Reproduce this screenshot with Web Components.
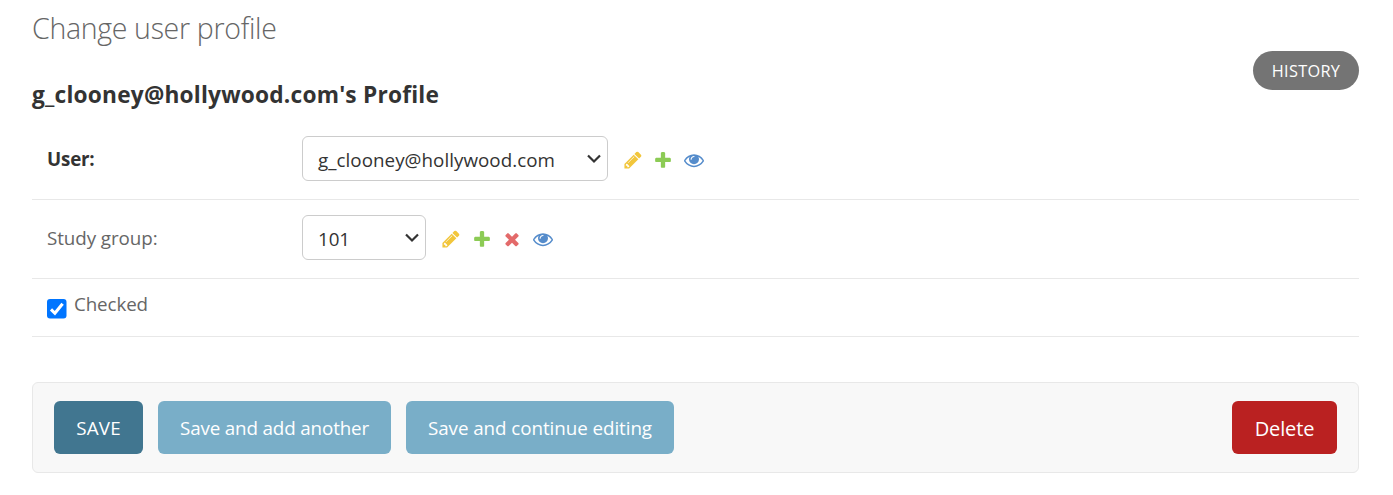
<!DOCTYPE html>
<html lang="en">
<head>
<meta charset="utf-8">
<title>Change user profile</title>
<style>
body { margin: 0; background: #fff; font-family: "Open Sans", "Noto Sans", sans-serif; color: #333; }
</style>
</head>
<body>
<admin-page></admin-page>
<script>
const define = (name, html, setup) => {
  customElements.define(name, class extends HTMLElement {
    connectedCallback() {
      if (this.shadowRoot) return;
      this.attachShadow({ mode: 'open' }).innerHTML = html;
      if (setup) setup(this, this.shadowRoot);
    }
  });
};

// Single-line text tracked so that it takes the given advance width.
define('tracked-text', `<style>
:host { display: inline-block; white-space: nowrap; }
span { display: inline-block; font-variant-ligatures: none; }
</style><span></span>`, (host, root) => {
  const span = root.querySelector('span');
  const text = host.getAttribute('text');
  const width = Number(host.getAttribute('width'));
  span.textContent = text;
  const gap = (width - span.getBoundingClientRect().width) / text.length;
  span.style.letterSpacing = gap.toFixed(3) + 'px';
  host.style.width = width + 'px';
});

const icons = {
  edit: ['#efb80b', 'M491 1536l91-91-235-235-91 91v107h128v128h107zm523-928q0-22-22-22-10 0-17 7l-542 542q-7 7-7 17 0 22 22 22 10 0 17-7l542-542q7-7 7-17zm-54-192l416 416-832 832h-416v-416zm683 96q0 53-37 90l-166 166-416-416 166-165q36-38 90-38 53 0 91 38l235 234q37 39 37 91z'],
  add: ['#70bf2b', 'M1600 796v192q0 40-28 68t-68 28h-416v416q0 40-28 68t-68 28h-192q-40 0-68-28t-28-68v-416h-416q-40 0-68-28t-28-68v-192q0-40 28-68t68-28h416v-416q0-40 28-68t68-28h192q40 0 68 28t28 68v416h416q40 0 68 28t28 68z'],
  remove: ['#dd4646', 'M1490 1322q0 40-28 68l-136 136q-28 28-68 28t-68-28l-294-294-294 294q-28 28-68 28t-68-28l-136-136q-28-28-28-68t28-68l294-294-294-294q-28-28-28-68t28-68l136-136q28-28 68-28t68 28l294 294 294-294q28-28 68-28t68 28l136 136q28 28 28 68t-28 68l-294 294 294 294q28 28 28 68z'],
  view: ['#2b70bf', 'M1664 960q-152-236-381-353 61 104 61 225 0 185-131.5 316.5t-316.5 131.5-316.5-131.5-131.5-316.5q0-121 61-225-229 117-381 353 133 205 333.5 326.5t434.5 121.5 434.5-121.5 333.5-326.5zm-720-384q0-20-14-34t-34-14q-125 0-214.5 89.5t-89.5 214.5q0 20 14 34t34 14 34-14 14-34q0-86 61-147t147-61q20 0 34-14t14-34zm848 384q0 34-20 69-140 230-376.5 368.5t-499.5 138.5-499.5-139-376.5-368q-20-35-20-69t20-69q140-229 376.5-368t499.5-139 499.5 139 376.5 368q20 35 20 69z']
};
define('action-icon', `<style>
:host { display: block; width: 20px; height: 20px; opacity: .8; }
svg { display: block; width: 100%; height: 100%; }
</style><svg viewBox="0 0 1792 1792"><path/></svg>`, (host, root) => {
  const [fill, d] = icons[host.getAttribute('name')];
  const path = root.querySelector('path');
  path.setAttribute('fill', fill);
  path.setAttribute('d', d);
});

define('select-box', `<style>
:host { display: flex; align-items: center; justify-content: space-between; box-sizing: border-box; height: 45px; padding: 0 5px 0 15px; border: 1px solid #ccc; border-radius: 6px; font-size: 18.8px; line-height: 28px; color: #333; }
svg { display: block; }
.text { padding-top: 3px; }
</style><div class="text"><slot></slot></div>
<svg width="16" height="12" viewBox="0 0 16 12"><path d="M2 2.5L8 8.5L14 2.5" fill="none" stroke="#333" stroke-width="2.2"/></svg>`);

define('form-row', `<style>
:host { display: flex; align-items: flex-start; box-sizing: border-box; height: 79px; padding: 15px; border-bottom: 1px solid #e8e8e8; }
.label { width: 255px; font-size: 18.8px; line-height: 28px; padding-top: 9px; color: #666; }
:host([required]) .label { font-weight: 700; color: #333; }
.icons { display: flex; gap: 10.7px; padding: 14px 0 0 15px; }
:host([required]) .icons { gap: 10.3px; }
</style><div class="label"><slot name="label"></slot></div><slot></slot><div class="icons"><slot name="icon"></slot></div>`);

define('check-row', `<style>
:host { display: flex; align-items: flex-start; box-sizing: border-box; height: 58px; padding: 11px 15px 0; border-bottom: 1px solid #e8e8e8; font-size: 18.8px; line-height: 28px; color: #666; gap: 7px; }
svg { display: block; margin-top: 9px; }
</style><svg width="20" height="20" viewBox="0 0 20 20"><rect width="19.5" height="19.5" rx="3" fill="#0075ff"/><path d="M4 10.4L7.9 14.3L15.6 4.8" fill="none" stroke="#fff" stroke-width="3.1"/></svg><slot></slot>`);

define('submit-button', `<style>
:host { display: flex; align-items: center; justify-content: center; height: 53px; border-radius: 6px; background: #79aec8; color: #fff; font-size: 18.8px; line-height: 28px; }
:host([kind=default]) { background: #417690; }
:host([kind=delete]) { background: #ba2121; margin-left: auto; font-size: 20px; }
:host([kind=delete]) slot { display: block; padding-top: 2px; }
</style><slot></slot>`);

define('submit-row', `<style>
:host { display: flex; box-sizing: border-box; height: 91px; margin-top: 45px; padding: 18px 21px; gap: 15px; border: 1px solid #e8e8e8; border-radius: 6px; background: #f8f8f8; }
</style><slot></slot>`);

define('history-link', `<style>
:host { display: flex; align-items: center; justify-content: center; width: 106px; height: 39px; border-radius: 20px; background: #747474; color: #fff; font-size: 16.3px; line-height: 24px; }
</style><slot></slot>`);

define('page-head', `<style>
:host { display: grid; grid-template-columns: 1fr auto; height: 121px; }
h1 { margin: 0; padding-top: 7px; font-size: 28.5px; font-weight: 300; line-height: 42px; color: #666; }
h2 { margin: 0; padding-top: 29px; font-size: 22.7px; font-weight: 700; line-height: 34px; }
.tools { padding-top: 51px; }
</style><div><h1><slot name="title"></slot></h1><h2><slot name="subtitle"></slot></h2></div><div class="tools"><slot name="tools"></slot></div>`);

define('admin-page', `<style>
:host { display: block; box-sizing: border-box; height: 495px; padding: 0 34px 0 32px; overflow: hidden; }
</style>
<page-head>
  <tracked-text slot="title" text="Change user profile" width="244.5"></tracked-text>
  <tracked-text slot="subtitle" text="g_clooney@hollywood.com's Profile" width="407"></tracked-text>
  <history-link slot="tools"><tracked-text text="HISTORY" width="68.5"></tracked-text></history-link>
</page-head>
<form-row required>
  <tracked-text slot="label" text="User:" width="47.5"></tracked-text>
  <select-box style="width:306px"><tracked-text text="g_clooney@hollywood.com" width="237"></tracked-text></select-box>
  <action-icon slot="icon" name="edit"></action-icon>
  <action-icon slot="icon" name="add"></action-icon>
  <action-icon slot="icon" name="view"></action-icon>
</form-row>
<form-row>
  <tracked-text slot="label" text="Study group:" width="110.5"></tracked-text>
  <select-box style="width:124px"><tracked-text text="101" width="32"></tracked-text></select-box>
  <action-icon slot="icon" name="edit"></action-icon>
  <action-icon slot="icon" name="add"></action-icon>
  <action-icon slot="icon" name="remove"></action-icon>
  <action-icon slot="icon" name="view"></action-icon>
</form-row>
<check-row><tracked-text text="Checked" width="74"></tracked-text></check-row>
<submit-row>
  <submit-button kind="default" style="width:89px"><tracked-text text="SAVE" width="44.5"></tracked-text></submit-button>
  <submit-button style="width:233px"><tracked-text text="Save and add another" width="189"></tracked-text></submit-button>
  <submit-button style="width:268px"><tracked-text text="Save and continue editing" width="224"></tracked-text></submit-button>
  <submit-button kind="delete" style="width:105px"><tracked-text text="Delete" width="59.5"></tracked-text></submit-button>
</submit-row>`);
</script>
</body>
</html>
